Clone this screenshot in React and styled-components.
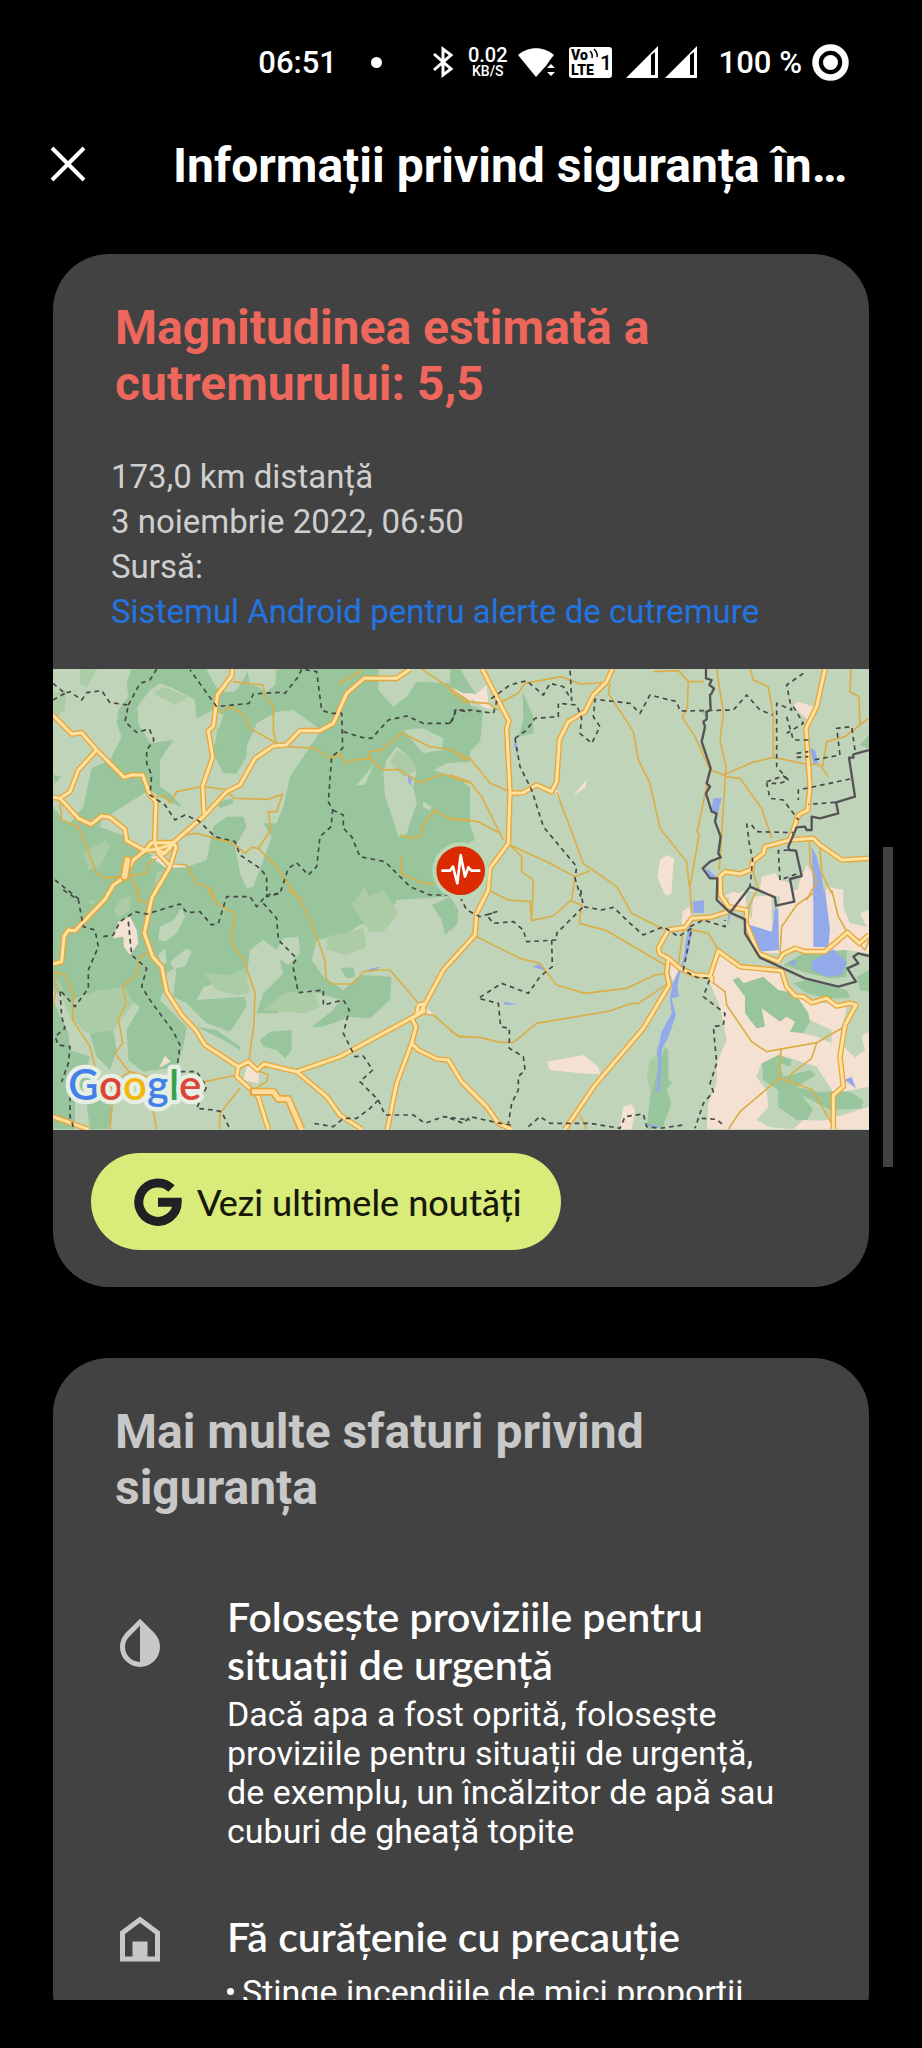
import React from 'react';
import styled, { createGlobalStyle } from 'styled-components';

const GlobalStyle = createGlobalStyle`
  * {
    box-sizing: border-box;
  }

  body {
    margin: 0;
    background: #000;
    color: #fff;
    font-family: Roboto, "Noto Sans", sans-serif;
  }

  h1, h2, h3, p, ul {
    margin: 0;
    padding: 0;
  }
`;

const Screen = styled.div`
  height: 100vh;
  display: flex;
  flex-direction: column;
  background: #000;
  padding-bottom: 48px;
`;

const StatusBar = styled.div`
  height: 124px;
  flex: none;
  display: flex;
  align-items: center;
  justify-content: flex-end;
  padding: 0 73px 0 0;
  font-size: 31px;
  font-weight: 500;

  svg {
    display: block;
    flex: none;
  }
`;

const Clock = styled.time`
  margin-right: 34px;
`;

const Dot = styled.span`
  width: 11px;
  height: 11px;
  border-radius: 50%;
  background: #fff;
  margin-right: 50px;
`;

const Speed = styled.div`
  display: flex;
  flex-direction: column;
  align-items: center;
  margin: 0 10px 0 14px;
  font-size: 20px;
  line-height: 18px;

  small {
    font-size: 14px;
    line-height: 14px;
  }
`;

const VolteIcon = styled.svg`
  margin-left: 13px;
`;

const Signals = styled.div`
  display: flex;
  gap: 7px;
  margin: 0 22px 0 14px;
`;

const Battery = styled.span`
  margin-right: 10px;
`;

const Header = styled.header`
  height: 84px;
  flex: none;
  display: flex;
  align-items: center;
  gap: 81px;
  padding: 0 53px 0 44px;
`;

const CloseButton = styled.button`
  width: 48px;
  height: 48px;
  flex: none;
  padding: 0;
  border: 0;
  background: none;
  color: #fff;

  svg {
    display: block;
  }
`;

const PageTitle = styled.h1`
  font-size: 48px;
  line-height: 56px;
  font-weight: 700;
  white-space: nowrap;
`;

const Scroller = styled.main`
  position: relative;
  flex: 1;
  min-height: 0;
  overflow: hidden;
  padding: 46px 53px 0;
`;

const ScrollThumb = styled.div`
  position: absolute;
  top: 639px;
  right: 29px;
  width: 10px;
  height: 320px;
  background: #424242;
`;

const Card = styled.section`
  background: #424242;
  border-radius: 56px;
  margin-bottom: 71px;
  padding: 46px 0 37px;
  overflow: hidden;
`;

const CardTitle = styled.h2`
  padding: 0 62px;
  font-size: 48px;
  line-height: 56px;
  font-weight: 700;
  color: ${props => (props.$alert ? '#ee675c' : '#c8c8c8')};
`;

const Details = styled.div`
  padding: 42px 58px 35px;
  font-size: 33px;
  line-height: 45px;
  color: #cfcfcf;

  a {
    color: #2374e1;
    text-decoration: none;
  }
`;

const MapImage = styled.svg`
  display: block;
  width: 100%;
  height: auto;
`;

const NewsButton = styled.button`
  display: flex;
  align-items: center;
  gap: 15px;
  height: 97px;
  margin: 23px 38px 0;
  padding: 0 40px 0 43px;
  border: 0;
  border-radius: 49px;
  background: #d9eb78;
  color: #15180a;
  font-family: Lato, Roboto, sans-serif;
  font-size: 36px;
  font-weight: 500;
  font-variant-ligatures: none;
`;

const TipList = styled.div`
  display: flex;
  flex-direction: column;
  gap: 62px;
  margin-top: 77px;
  padding: 0 80px 0 57px;
`;

const Tip = styled.article`
  display: grid;
  grid-template-columns: 60px 1fr;
  column-gap: 57px;
  align-items: center;
`;

const TipIcon = styled.svg`
  display: block;
  margin: -4px 0 -8px;
  fill: #c8c8c8;
`;

const TipTitle = styled.h3`
  font-family: Lato, Roboto, sans-serif;
  font-size: 41px;
  line-height: 48px;
  font-weight: 600;
  font-variant-ligatures: none;
`;

const TipText = styled.p`
  grid-column: 2;
  margin-top: 6px;
  font-size: 34px;
  line-height: 39px;
`;

const TipBullets = styled.ul`
  grid-column: 2;
  margin-top: 12px;
  list-style: none;
  font-size: 34px;
  line-height: 39px;

  li {
    display: flex;
    gap: 8px;
  }

  li::before {
    content: '';
    flex: none;
    width: 7px;
    height: 7px;
    margin-top: 15px;
    border-radius: 50%;
    background: #fff;
  }
`;

// The map is drawn in four tiles, each with its own origin.
const tiles = [
  {
    x: 0,
    y: 0,
    forest: ['9,27 1210,27 1260,110 1260,720 9,720'],
    meadow: [
      '9,27 245,27 230,70 235,110 205,150 200,190 215,230 180,300 125,325 100,440 60,490 40,480 9,440',
      '300,90 330,70 370,85 435,120 440,175 490,150 520,165 500,230 480,300 440,400 400,445 360,400 330,380 330,300 370,240 300,250 265,190 262,140',
      '470,27 595,27 580,60 555,95 510,95 485,60',
      '590,27 680,27 675,75 650,95 600,70',
      '620,190 680,155 730,150 800,200 810,215 760,290 720,350 700,440 680,490 640,490 665,530 640,600 610,680 590,685 570,640 555,560 590,500 580,470 530,470 490,500 470,600 400,625 330,600 280,570 230,530 150,500 155,480 250,420 300,390 330,410 390,440 430,360 490,280 520,340 560,340 590,260',
      '985,27 1260,27 1260,110 1200,70 1100,65 1070,110 1030,140 985,90',
      '1060,210 1120,205 1180,235 1175,270 1120,280',
      '1000,340 1010,300 1040,260 1080,290 1100,330 1090,380 1100,430 1070,520 1045,530 1030,480 1005,410',
      '1150,330 1190,310 1260,305 1260,380 1190,345',
      '970,315 945,375 920,375',
      '1120,425 1145,440 1140,452 1118,440',
    ],
    grove: [
      '10,100 50,90 45,150 9,180',
      '310,100 340,80 415,110 375,135',
      '100,580 165,540 180,560 150,620 115,630',
      '90,27 140,27 110,85 90,70',
      '1040,270 1080,290 1100,330 1060,350 1020,310',
      '320,640 345,625 340,670 310,700',
      '915,720 945,680 960,720',
    ],
    woods: [
      '9,345 35,350 15,370',
      '500,425 550,415 550,430 510,445',
      '540,160 590,190 590,290 560,340 530,340 500,270 500,210',
    ],
    sand: ['300,590 340,585 360,605 410,620 350,625', '1205,75 1220,70 1270,110 1260,125 1210,95'],
    water: ['1072,345 1085,355 1084,378 1076,370'],
    minor: [
      '550,65 590,70 640,75 645,110 670,140 670,215 680,250',
      '510,160 540,138 580,165 600,205 680,250',
      '30,430 35,480 85,500 140,640 165,655 215,650 290,640 295,610 320,595',
      '240,650 260,680 268,720',
      '462,380 540,390',
      '320,410 345,408 360,430 380,395 455,380',
      '530,395 555,415 655,418 697,402 680,455 655,455 662,510 625,565 605,562 585,580 550,550 440,520 400,525',
      '715,260 795,265 845,297 870,280 885,310 920,298 955,298 960,275 1000,268 1055,218 1140,260 1210,270 1240,300 1260,295',
      '955,290 1000,330 1045,328 1110,368 1180,342 1260,370',
      '865,72 940,30',
      '1115,27 1260,125',
      '1260,478 1200,478 1155,450 1120,495 1115,528 1080,535 1050,525',
      '1055,590 1052,640 1120,670 1160,670',
      '625,565 680,620 720,680 750,720',
      '370,612 410,615 440,670 470,680 495,720',
    ],
    major: [
      '9,165 65,222 95,218 140,270 222,352 245,345 278,345 300,405 318,425 314,545 325,580 360,618',
      '140,270 85,330 60,395 30,415 9,412',
      '285,572 305,548 370,548',
      '318,568 370,552',
      '335,585 365,560',
      '30,415 85,475 123,493 155,468 180,472 225,508 230,542 285,572 318,568 345,580 370,548 378,562 360,620 305,715 283,820 308,890 335,920 350,995 395,1065 437,1110 465,1155 565,1220 595,1205 622,1230 642,1212 740,1235 870,1190 1110,1060 1180,930 1275,825 1280,760 1315,690 1320,625 1375,550 1380,395 1370,205 1377,183 1297,27',
      '547,27 545,48 502,105 490,200 475,212 488,292 458,378 462,460',
      '1080,27 1040,55 942,55 890,100 850,190 810,212 750,212 708,255 670,258 615,295 570,375 530,395 462,468 370,548',
      '285,572 250,600 220,655 190,675 165,718 115,770 75,812 55,810 42,830 35,905 9,912',
      '230,597 222,655',
    ],
    dashed: [
      '9,70 45,100 60,95 95,120 110,98 155,92 180,128 235,135 225,185 260,217 298,207 312,240 290,270 290,310 305,345 300,405 345,435 375,480 405,465 445,482 495,530 555,545 570,585 630,625 650,650 650,710 690,700 715,625 740,608 775,645 800,620 810,530 843,500 848,450 835,425 845,290 878,265 875,160 840,160 815,150 800,35 755,27 745,50 705,100 690,97 610,102 597,130 500,140 420,30',
      '9,120 45,100',
      '235,135 270,70 300,60 320,27',
      '880,215 935,232 965,235 1015,180 1070,168 1120,190 1205,190 1215,150 1260,155',
      '848,450 880,465 880,505 905,530 930,590 1005,605 1040,640 1080,680 1140,705 1200,705',
      '15,660 90,720',
    ],
    solid: [],
  },
  {
    x: 1200,
    y: 0,
    forest: [],
    meadow: [],
    grove: [],
    woods: [
      '0,27 30,27 75,100 40,100 0,80',
      '0,115 100,150 90,245 35,300 0,305',
      '0,350 40,360 55,410 50,460 75,540 50,550 0,550',
      '218,95 250,170 250,220 205,230 220,180',
      '750,150 770,150 765,170',
      '1257,225 1257,265 1230,255',
    ],
    sand: [
      '5,75 20,72 75,105 110,75 115,130 130,150 100,140',
      '1030,140 1040,125 1095,140 1085,190',
      '650,585 672,595 665,680 665,700 645,705 622,650 630,600',
      '935,650 975,640 990,660 1020,670 1035,720 925,720',
      '1070,615 1100,660 1070,720 1035,720 1050,660',
      '1130,680 1185,690 1170,720 1140,720',
      '820,710 850,695 890,710 880,720',
      '370,405 410,360 405,385',
      '312,390 328,395 326,420',
    ],
    water: [
      '190,250 200,250 205,295',
      '790,415 815,413 805,455 783,455',
      '1080,265 1095,270 1105,310 1090,312',
      '1085,560 1100,590 1115,650 1125,720 1090,720',
      '765,620 800,650 780,655',
    ],
    minor: [
      '610,35 685,32 715,65 760,65',
      '715,65 712,145 697,172 735,230 780,330 745,500 740,515 748,520 720,680 725,760',
      '480,70 475,100 550,215 565,300 600,370 630,505 710,605 718,680',
      '800,27 820,160 810,240 828,320 808,630',
      '780,330 820,345 905,308 970,292 1010,300 1055,310 1110,315 1135,350',
      '900,27 910,60 955,80 970,170 970,290',
      '825,350 870,355 935,445 965,535',
      '1203,27 1200,95 1227,110 1230,195 1255,175',
      '1230,195 1185,230 1130,245 1118,320',
      '320,395 400,610 500,680 545,760',
      '180,555 300,610 375,650 420,632',
      '375,650 365,720',
      '180,555 215,590 215,635 250,660 245,780',
      '0,270 60,295 120,370 180,395',
      '0,345 60,365 95,410 160,540',
      '0,475 85,485 150,520',
      '0,90 40,125 115,130 145,150',
      '155,125 205,100 225,70 335,50 390,72 470,68',
      '908,630 925,690',
      '1078,540 1080,610 1100,665 1070,720',
      '1110,560 1115,640 1145,700',
    ],
    major: [
      '487,27 470,65 430,105 405,155 355,185 328,240 320,365 305,395 260,375 220,398 180,400',
      '1125,27 1100,140 1068,205 1080,380 1073,450 1045,465 1020,540',
      '1257,595 1175,600 1110,555 1090,535 1020,540 945,560 940,580 908,605 905,628 870,642 825,635 810,650 812,705 835,740 890,750 888,790 925,880 985,905',
    ],
    dashed: [
      '0,190 20,150 60,150 130,160 140,125 125,115 180,75 230,62 280,105 300,70 340,80 365,120 360,27',
      '195,235 230,210 255,175 325,170 325,130 380,135 395,175 390,220 425,250 450,200 430,170 435,118 540,130 570,160 600,105 680,125 690,153 850,150 890,105 930,150 968,165',
      '195,235 210,320 245,390 280,500 330,560 380,620 375,655 392,710',
      '1060,40 1010,75 1025,150 980,130 980,320 1015,360 990,370 950,370 960,415 1000,420 1045,480',
      '1010,170 1030,240 1080,240',
      '1030,140 1060,190 1010,220',
      '1040,280 1075,275',
      '1040,292 1075,290',
      '1215,270 1205,200 1160,205 1170,285 1090,300',
      '1200,357 1045,390 1045,420',
      '1155,427 1075,433',
      '950,365 1000,348 1015,360',
      '905,495 920,515 1030,518',
      '890,490 898,550 908,600 900,680',
      '1015,570 985,572 990,660 1045,640',
    ],
    solid: [
      '768,27 768,55 785,60 778,75 792,85 785,100 780,105 782,150 770,155 770,178 760,185 765,200 755,245 782,325 770,370 780,380 768,400 785,455 800,460 795,485 812,530 805,580 812,592 780,605 758,625 780,655 802,655 800,720 840,758',
      '1257,270 1210,283 1210,293 1197,293 1215,410 1158,427 1165,460 1110,475 1085,470 1085,510 1070,510 1065,500 1040,502 1015,560 1017,570 1038,572 1055,648 1020,657 1033,725 978,737 975,712 900,680 840,758',
    ],
  },
  {
    x: 0,
    y: 690,
    forest: [
      '9,-20 1160,-20 1110,15 1030,60 1000,90 930,105 890,130 800,150 785,210 820,260 880,300 930,255 1025,260 1020,330 960,385 900,380 820,410 785,410 850,360 870,330 810,310 740,310 680,370 620,370 640,310 700,250 680,180 640,150 600,180 590,260 540,270 460,290 440,330 585,320 590,350 540,425 470,400 440,370 410,340 370,320 380,230 350,250 345,290 330,330 410,410 400,470 380,530 280,545 235,510 230,420 270,350 200,300 160,340 60,330 9,300',
    ],
    meadow: [
      '325,150 330,110 370,90 395,55 405,80 380,130 345,155',
      '360,215 410,175 425,185 405,230 370,235',
      '670,195 700,145 745,140 750,190 715,225',
      '325,195 345,175 350,215 335,230',
      '1010,90 1040,30 1260,15 1260,300 1020,260',
    ],
    grove: [
      '190,60 215,25 245,20 240,60 205,85',
      '830,140 940,115 950,170 890,195 830,180',
      '900,40 1000,0 1045,70 1000,125 960,125',
      '460,250 540,255 585,235 600,310 560,315 500,300',
      '9,250 60,330 150,300 225,290 250,340 190,420 110,430 60,380',
      '640,360 700,310 790,300 810,350 760,370',
      '105,35 135,30 130,45',
    ],
    woods: [
      '9,330 55,430 60,480 120,500 110,540 130,600 190,650 175,718 120,718 110,640 75,590 75,718 9,718',
      '120,430 190,420 200,480 180,540 140,500',
      '440,410 500,420 570,470 570,480 520,450',
      '630,450 660,425 725,420 725,480 705,505 680,480 640,470',
      '1145,45 1200,20 1225,60 1220,100 1185,135 1175,90',
      '870,235 910,232 915,260 890,265',
    ],
    sand: [
      '205,95 240,80 260,120 265,160 240,195 222,170 220,140 190,145',
      '345,497 362,515 327,533',
      '595,515 628,545 625,580 580,570',
      '1125,350 1148,370 1125,375',
    ],
    water: ['935,248 965,235 995,230 970,242'],
    minor: [
      '480,-10 500,40 555,70 543,160 580,205 615,310 612,400 597,510',
      '715,0 750,25 800,140 825,210 828,265 845,282 910,282 940,245 985,240 1020,240 1110,345',
      '258,-10 265,30 290,40',
      '295,190 270,200 262,250 218,290 228,340 205,385 218,460 195,490 240,550',
      '9,245 45,255 70,310 68,390 120,470 140,550 190,600 180,718',
      '9,350 18,300 15,250',
      '455,577 560,555',
      '570,595 510,670 508,718',
      '1115,372 1150,375 1225,440 1260,440',
      '620,540 655,555 650,575 610,600',
      '200,570 240,545 290,560 320,718',
    ],
    major: [
      '565,530 560,560 605,600 625,620 655,718',
      '740,545 830,620 870,675 935,718',
      '1105,345 1120,342 1122,365 1100,372 1105,345',
      '1110,370 1085,385 1098,410 1085,460 1040,580 1012,718',
      '1085,460 1105,480 1160,507 1195,510 1235,575 1310,650 1345,700 1385,718',
      '9,680 115,718',
    ],
    dashed: [
      '40,0 85,30 100,110 135,120 145,170 115,240 115,295 75,350 30,300 35,380 45,415 15,440 25,465 60,470 55,520 35,575',
      '160,140 190,135 210,95 255,65 290,72 390,42 410,68 450,65 485,105 505,100 530,20 600,20 620,50 650,15 685,10',
      '235,95 245,195 290,235 275,290 300,330 370,425 390,465 380,545 440,545 470,590 440,655 490,660 515,665 540,718',
      '640,40 680,85 685,150 740,205 728,225 745,308 820,300 820,345 880,330 898,360 880,430 915,500 940,498 968,540 930,575 985,630 1005,675 1090,675 1125,700 1180,680 1260,690',
      '985,630 960,655 920,685 880,685 850,710 790,700',
      '60,620 60,680 70,710',
    ],
    solid: [],
  },
  {
    x: 1200,
    y: 690,
    forest: [],
    meadow: [],
    grove: ['590,560 600,510 640,480 640,600 600,600'],
    sand: [
      '780,230 800,190 870,235 990,245 1010,300 1060,320 1090,335 1160,345 1215,340 1190,410 1257,430 1257,718 770,718 775,640 800,580 800,520 830,450 810,350 780,280',
      '840,20 890,0 1257,0 1257,190 1190,180 1130,185 1050,180 990,190 930,190 900,130 890,60 830,60',
      '290,515 400,495 445,530 450,553 390,550 300,540',
      '520,650 545,643 555,660 545,718 508,718',
      '640,0 668,0 655,18',
      '697,65 718,50 728,90 695,105',
      '665,210 690,240 670,275 660,250',
    ],
    clearing: [
      '1180,0 1257,0 1257,60 1230,70 1250,110 1200,100 1180,50',
      '1190,350 1257,300 1257,420 1235,440 1245,480 1215,503 1190,480 1170,440',
      '935,520 990,495 1100,530 1140,590 1150,610 1257,590 1257,650 1160,680 1120,692 1060,690 1030,718 960,712 920,690 955,650 950,600 918,560',
      '1080,390 1145,420 1145,460 1100,440 1060,430',
      '885,0 990,20 985,60 955,110 910,95 890,60',
    ],
    woods: [
      '0,30 20,70 25,95 0,125',
      '590,718 600,620 645,470 655,480 655,570 667,575 650,600 665,640 645,690 640,710',
      '848,270 865,262 880,280 940,260 985,300 1035,310 1075,370 1080,395 1060,430 1020,425 1035,395 1010,380 990,395 935,355 945,410 920,415 885,370 885,320',
      '1000,225 1060,190 1190,180 1190,260 1140,265 1060,245',
      '1030,280 1070,270 1190,300 1200,325 1130,325 1070,310',
      '935,520 985,495 1025,510 1020,530 990,520 1000,560 1080,540 1097,555 1040,590 1100,605 1200,605 1240,630 1235,655 1140,660 1055,615 1090,660 1070,690 1040,690 985,650 985,600 940,570',
      '1220,260 1257,240 1257,305 1230,300',
    ],
    glade: ['910,20 965,15 965,105 950,115 905,90'],
    water: [
      '728,35 762,30 762,68 730,68',
      '1090,0 1125,0 1140,120 1135,172 1090,170',
      '900,105 965,125 975,50 985,60 987,180 930,185 905,150',
      '1085,215 1150,178 1190,215 1175,255 1130,260 1085,240',
      '1015,215 1040,210 1035,230',
      '715,110 728,115 715,190 690,250 682,290 687,320 665,325 678,375 655,440 635,480 630,605 620,605 625,510 620,490 635,425 665,370 660,325 668,280 700,210',
      '1183,570 1205,560 1218,595',
      '248,230 270,222 285,242',
      '160,335 205,342 165,345',
      '585,698 630,710 610,716',
      '835,70 842,75 832,105',
    ],
    minor: [
      '115,0 175,30 240,35 245,92 310,78 362,32 395,45 388,100 470,122 650,228',
      '80,140 210,205 270,220 320,285 405,310 530,295 615,255 650,250',
      '0,422 30,440 90,442 150,457 190,457 260,400 480,363 545,340 565,340 655,280',
      '545,70 640,118',
      '720,118 775,130 805,180',
      '785,275 825,305 830,345 905,455 950,485 1100,458 1180,412',
      '1100,458 1085,505 1025,550 1015,575',
      '993,475 988,565 870,665 835,718',
      '988,565 1085,598 1110,640 1145,700',
      '1090,10 1040,45 995,110 990,190',
      '1145,0 1165,80 1192,127',
      '390,675 410,718',
      '920,0 890,65',
      '700,115 685,225',
      '1192,127 1245,180 1257,150',
    ],
    major: [
      '835,65 780,82 725,85 705,112 655,120 625,175 630,192 655,205 650,250 658,285 580,415 435,585 345,718',
      '655,205 690,235 735,255 780,258 805,183 870,230 995,242 1010,290 1035,318 1060,320 1085,338 1130,325 1160,348 1200,340 1218,345 1185,405 1170,500 1180,590 1150,615 1150,718',
      '785,275 785,258',
      '985,215 1000,192 1035,175 1065,185 1125,185 1192,127 1228,160 1257,135',
    ],
    dashed: [
      '392,0 400,50 455,60 490,52 540,100 580,135 640,110 685,140 725,115 700,240 740,262 780,265 760,320 825,370 820,405 790,410 800,520 780,580 790,605 760,640 735,715',
      '30,20 50,60 90,80 140,65 110,75 130,100 190,95 220,120 230,155 320,150 320,130 400,50',
      '305,150 307,230 270,260 235,310 155,280 85,325 145,340 152,410 178,415 178,475 220,500 225,540 205,560 205,600 185,640 175,700',
      '720,110 760,90 825,110 825,90',
      '0,685 40,700 60,680 150,700 185,705',
      '235,710 270,680 300,700 420,700 510,715 525,680 580,672 590,710 630,715 700,705',
      '755,685 800,688 825,710',
    ],
    solid: [
      '840,68 885,88 885,130 930,203 1065,265 1165,290 1218,275 1192,235 1225,220 1210,200 1225,190 1257,198',
    ],
  },
];

const layers = [
  { name: 'forest', fill: '#98c59b' },
  { name: 'meadow', fill: '#c0d4ba' },
  { name: 'sand', fill: '#f5e1d1' },
  { name: 'clearing', fill: '#c0d4ba' },
  { name: 'grove', fill: '#abcca5' },
  { name: 'woods', fill: '#98c59b' },
  { name: 'glade', fill: '#f5e1d1' },
  { name: 'water', fill: '#92a9ea' },
  { name: 'minor', stroke: '#dcae48', width: 5 },
  { name: 'major', stroke: '#e6a73a', width: 17 },
  { name: 'major', stroke: '#ffe2a2', width: 9 },
  { name: 'dashed', stroke: '#454846', width: 5, dash: '14 12' },
  { name: 'solid', stroke: '#555357', width: 7 },
];

const EarthquakeMap = () => (
  <MapImage viewBox="9 27 2448 1383" role="img" aria-label="Hartă">
    <rect x="9" y="27" width="2448" height="1383" fill="#c0d4ba" />
    {layers.map((layer, i) => (
      <g
        key={i}
        fill={layer.fill || 'none'}
        stroke={layer.stroke}
        strokeWidth={layer.width}
        strokeDasharray={layer.dash}
        strokeLinejoin="round"
      >
        {tiles.map(tile => (
          <g key={`${tile.x}-${tile.y}`} transform={`translate(${tile.x} ${tile.y})`}>
            {(tile[layer.name] || []).map(points =>
              layer.fill ? (
                <polygon key={points} points={points} />
              ) : (
                <polyline key={points} points={points} />
              )
            )}
          </g>
        ))}
      </g>
    ))}
    <g fill="none" strokeLinejoin="round">
      <path d="M600 1295H670L685 1317H715L755 1410" stroke="#e6a73a" strokeWidth="24" />
      <path d="M606 1295H670L685 1317H715L755 1410" stroke="#ffdb9c" strokeWidth="14" />
      <path d="M232 600L224 650" stroke="#e6a73a" strokeWidth="26" strokeLinecap="round" />
      <path d="M232 600L224 650" stroke="#ffdb9c" strokeWidth="16" strokeLinecap="round" />
    </g>
    <circle cx="1232" cy="632" r="85" fill="#b9d8b4" />
    <circle cx="1232" cy="632" r="73" fill="#dc2a02" />
    <path
      d="M1174 632H1200L1209 620L1222 670L1232 585L1245 650L1255 622L1264 632H1291"
      fill="none"
      stroke="#fff"
      strokeWidth="8"
      strokeLinejoin="round"
    />
    <text
      x="55"
      y="1321"
      fontFamily="Lato, Roboto, sans-serif"
      fontSize="126"
      fontWeight="600"
      stroke="#e6efe2"
      strokeWidth="26"
      strokeLinejoin="round"
      paintOrder="stroke"
    >
      <tspan fill="#4280ea">G</tspan>
      <tspan fill="#dc4437">o</tspan>
      <tspan fill="#f3b60b">o</tspan>
      <tspan fill="#4280ea">g</tspan>
      <tspan fill="#35a150">l</tspan>
      <tspan fill="#dc4437">e</tspan>
    </text>
  </MapImage>
);

const SignalIcon = () => (
  <svg width="32" height="32" viewBox="0 0 32 32">
    <path fill="#fff" fillRule="evenodd" d="M32 0V32H0ZM25 9V29H29V6Z" />
  </svg>
);

const App = () => (
  <Screen>
    <GlobalStyle />
    <StatusBar>
      <Clock>06:51</Clock>
      <Dot />
      <svg width="22" height="32" viewBox="0 0 22 32">
        <path
          d="M2 8L19 23L11 29V3L19 9L2 24"
          fill="none"
          stroke="#fff"
          strokeWidth="3"
        />
      </svg>
      <Speed>
        0.02
        <small>KB/S</small>
      </Speed>
      <svg width="38" height="32" viewBox="0 0 38 32">
        <path
          fill="#fff"
          d="M0 9C10 0 26 0 36 9L32 14L28 20L26 22L18 31ZM29 22L33 18L37 22ZM29 26H37L33 30Z"
        />
      </svg>
      <VolteIcon width="43" height="32" viewBox="0 0 43 32">
        <rect y="1" width="43" height="31" rx="3" fill="#fff" />
        <g fontFamily="Roboto, sans-serif" fontWeight="900" fontSize="14" fill="#000">
          <text x="2" y="14">Vo</text>
          <text x="2" y="29">LTE</text>
          <text x="31" y="24" fontSize="21" fontWeight="500">1</text>
        </g>
        <path d="M21 5Q24 8 23 12M25 3Q29 7 28 11" fill="none" stroke="#000" strokeWidth="1.5" />
      </VolteIcon>
      <Signals>
        <SignalIcon />
        <SignalIcon />
      </Signals>
      <Battery>100 %</Battery>
      <svg width="37" height="37" viewBox="0 0 37 37">
        <circle cx="18.5" cy="18.5" r="15" fill="none" stroke="#fff" strokeWidth="6.5" />
        <circle cx="18.5" cy="18.5" r="7.5" fill="#fff" />
      </svg>
    </StatusBar>
    <Header>
      <CloseButton aria-label="Închide">
        <svg width="48" height="48" viewBox="0 0 48 48">
          <path d="M8 6L40 38M40 6L8 38" stroke="currentColor" strokeWidth="4" />
        </svg>
      </CloseButton>
      <PageTitle>Informații privind siguranța în…</PageTitle>
    </Header>
    <Scroller>
      <Card>
        <CardTitle $alert>Magnitudinea estimată a cutremurului: 5,5</CardTitle>
        <Details>
          <p>173,0 km distanță</p>
          <p>3 noiembrie 2022, 06:50</p>
          <p>Sursă:</p>
          <a href="#sursa">Sistemul Android pentru alerte de cutremure</a>
        </Details>
        <EarthquakeMap />
        <NewsButton>
          <svg width="48" height="48" viewBox="0 0 48 48">
            <path
              d="M37.5 10.5A19.2 19.2 0 1 0 43.2 24.3H24"
              fill="none"
              stroke="#202124"
              strokeWidth="9"
            />
          </svg>
          Vezi ultimele noutăți
        </NewsButton>
      </Card>
      <Card>
        <CardTitle>Mai multe sfaturi privind siguranța</CardTitle>
        <TipList>
          <Tip>
            <TipIcon width="60" height="60" viewBox="0 0 24 24">
              <path d="M17.66 7.93L12 2.27 6.34 7.93c-3.12 3.12-3.12 8.19 0 11.31C7.9 20.8 9.95 21.58 12 21.58s4.1-.78 5.66-2.34c3.12-3.12 3.12-8.19 0-11.31zM12 19.59c-1.6 0-3.11-.62-4.24-1.76C6.62 16.69 6 15.19 6 13.59s.62-3.11 1.76-4.24L12 5.1v14.49z" />
            </TipIcon>
            <TipTitle>Folosește proviziile pentru situații de urgență</TipTitle>
            <TipText>
              Dacă apa a fost oprită, folosește proviziile pentru situații de urgență, de
              exemplu, un încălzitor de apă sau cuburi de gheață topite
            </TipText>
          </Tip>
          <Tip>
            <TipIcon width="60" height="60" viewBox="0 0 24 24">
              <path
                fillRule="evenodd"
                d="M12 3L4 9V21H20V9ZM12 5.5L18 10V19H15V13H9V19H6V10Z"
              />
            </TipIcon>
            <TipTitle>Fă curățenie cu precauție</TipTitle>
            <TipBullets>
              <li>Stinge incendiile de mici proporții</li>
            </TipBullets>
          </Tip>
        </TipList>
      </Card>
      <ScrollThumb />
    </Scroller>
  </Screen>
);

export default App;
